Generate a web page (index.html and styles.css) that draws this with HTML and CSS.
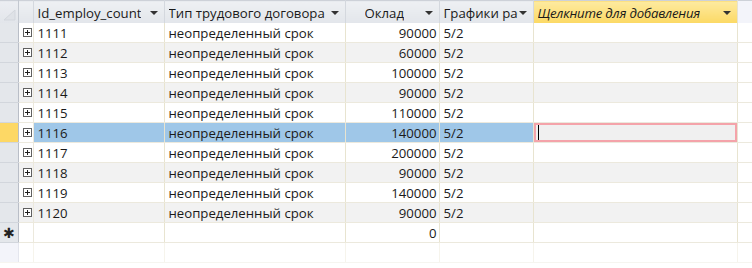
FILE: index.html
```html
<!DOCTYPE html>
<html lang="ru">
<head>
<meta charset="utf-8">
<link rel="stylesheet" href="styles.css">
</head>
<body>
<table class="grid">
  <colgroup>
    <col class="w-sel"><col class="w-exp"><col class="w-c1"><col class="w-c2"><col class="w-c3"><col class="w-c4"><col class="w-c5"><col class="w-rest">
  </colgroup>
  <thead>
    <tr class="head">
      <th class="corner"><svg class="corner-tri" width="14" height="12" viewBox="0 0 14 12"><polygon points="13,1 13,11 2,11" fill="#dfe2e7" stroke="#d3d7dd" stroke-width="1"/></svg></th>
      <th class="hexp"></th>
      <th class="hcell"><span class="htext">Id_employ_count</span><span class="arrow"></span></th>
      <th class="hcell"><span class="htext">Тип трудового договора</span><span class="arrow"></span></th>
      <th class="hcell"><span class="htext right">Оклад</span><span class="arrow"></span></th>
      <th class="hcell"><span class="htext">Графики работы</span><span class="arrow"></span></th>
      <th class="hcell add"><span class="htext">Щелкните для добавления</span><span class="arrow"></span></th>
      <th class="hrest"></th>
    </tr>
  </thead>
  <tbody>
    <tr class="row"><td class="sel"></td><td class="exp"><span class="plus"></span></td><td class="c">1111</td><td class="c">неопределенный срок</td><td class="c num">90000</td><td class="c">5/2</td><td class="c"></td><td class="rest"></td></tr>
    <tr class="row alt"><td class="sel"></td><td class="exp"><span class="plus"></span></td><td class="c">1112</td><td class="c">неопределенный срок</td><td class="c num">60000</td><td class="c">5/2</td><td class="c"></td><td class="rest"></td></tr>
    <tr class="row"><td class="sel"></td><td class="exp"><span class="plus"></span></td><td class="c">1113</td><td class="c">неопределенный срок</td><td class="c num">100000</td><td class="c">5/2</td><td class="c"></td><td class="rest"></td></tr>
    <tr class="row alt"><td class="sel"></td><td class="exp"><span class="plus"></span></td><td class="c">1114</td><td class="c">неопределенный срок</td><td class="c num">90000</td><td class="c">5/2</td><td class="c"></td><td class="rest"></td></tr>
    <tr class="row"><td class="sel"></td><td class="exp"><span class="plus"></span></td><td class="c">1115</td><td class="c">неопределенный срок</td><td class="c num">110000</td><td class="c">5/2</td><td class="c"></td><td class="rest"></td></tr>
    <tr class="row current"><td class="sel"></td><td class="exp"><span class="plus"></span></td><td class="c">1116</td><td class="c">неопределенный срок</td><td class="c num">140000</td><td class="c">5/2</td><td class="c active"><span class="caret"></span></td><td class="rest"></td></tr>
    <tr class="row"><td class="sel"></td><td class="exp"><span class="plus"></span></td><td class="c">1117</td><td class="c">неопределенный срок</td><td class="c num">200000</td><td class="c">5/2</td><td class="c"></td><td class="rest"></td></tr>
    <tr class="row alt"><td class="sel"></td><td class="exp"><span class="plus"></span></td><td class="c">1118</td><td class="c">неопределенный срок</td><td class="c num">90000</td><td class="c">5/2</td><td class="c"></td><td class="rest"></td></tr>
    <tr class="row"><td class="sel"></td><td class="exp"><span class="plus"></span></td><td class="c">1119</td><td class="c">неопределенный срок</td><td class="c num">140000</td><td class="c">5/2</td><td class="c"></td><td class="rest"></td></tr>
    <tr class="row alt"><td class="sel"></td><td class="exp"><span class="plus"></span></td><td class="c">1120</td><td class="c">неопределенный срок</td><td class="c num">90000</td><td class="c">5/2</td><td class="c"></td><td class="rest"></td></tr>
    <tr class="row new"><td class="sel star">✱</td><td class="exp"></td><td class="c"></td><td class="c"></td><td class="c num">0</td><td class="c"></td><td class="c"></td><td class="rest"></td></tr>
    <tr class="row empty"><td class="sel"></td><td class="exp"></td><td class="c"></td><td class="c"></td><td class="c"></td><td class="c"></td><td class="c"></td><td class="rest"></td></tr>
  </tbody>
</table>
</body>
</html>
```

FILE: styles.css
```css
html, body {
  margin: 0;
  padding: 0;
  background: #ffffff;
  overflow: hidden;
}

.grid {
  border-collapse: collapse;
  table-layout: fixed;
  width: 752px;
  font-family: "Open Sans", "Noto Sans", sans-serif;
  font-size: 13.2px;
  color: #1a1a1a;
}

.w-sel { width: 18px; }
.w-exp { width: 15px; }
.w-c1 { width: 131px; }
.w-c2 { width: 181px; }
.w-c3 { width: 94px; }
.w-c4 { width: 94px; }
.w-c5 { width: 204px; }
.w-rest { width: 15px; }

.head th {
  height: 22px;
  padding: 0;
  font-weight: normal;
  text-align: left;
  white-space: nowrap;
  overflow: hidden;
  position: relative;
  border-top: 1px solid #cdd1d8;
}

.corner {
  background: linear-gradient(#eceef2, #e2e5ea);
  border-right: 1px solid #c3c8d0;
}

.corner-tri {
  display: block;
  margin: 6px 0 0 2px;
}

.hexp {
  background: linear-gradient(#eef0f3, #e3e6eb);
  border-right: 1px solid #d4d8de;
}

.hcell {
  background: linear-gradient(#eef0f3, #e3e6eb);
  border-right: 1px solid #d4d8de;
}

.hcell .htext {
  display: inline-block;
  vertical-align: middle;
  max-width: calc(100% - 19px);
  margin-left: 4px;
  overflow: hidden;
  white-space: nowrap;
}

.hcell .htext.right {
  margin-left: 19px;
}

.hcell.add {
  background: linear-gradient(#fdeaa0, #fcd964);
  font-style: italic;
  border-right: 1px solid #e6e2cf;
}

.hcell.add .htext {
  letter-spacing: -0.2px;
}

.hrest {
  background: #f3f4fa;
}

.arrow {
  position: absolute;
  right: 6px;
  top: 10px;
  width: 0;
  height: 0;
  border-left: 4px solid transparent;
  border-right: 4px solid transparent;
  border-top: 4px solid #333;
}

.row td {
  height: 19px;
  padding: 0;
  border-bottom: 1px solid #ece9dd;
  white-space: nowrap;
  overflow: hidden;
}

.row .c {
  padding: 0 4px;
  border-right: 1px solid #e8e4d0;
}

.row .num {
  text-align: right;
  padding-right: 2px;
}

.row.alt .c,
.row.alt .exp {
  background: #f2f2f2;
}

.sel {
  background: #e4e7eb;
  border-right: 1px solid #b9bec7;
  text-align: center;
}

.row td.sel {
  border-bottom: 1px solid #d2d6dc;
}

.exp {
  border-right: 1px solid #ece9dd;
  text-align: center;
}

.plus {
  display: block;
  position: relative;
  width: 9px;
  height: 9px;
  box-sizing: border-box;
  border: 1px solid #606060;
  background: #ffffff;
  margin: 0 auto 0 4px;
}

.plus::before,
.plus::after {
  content: "";
  position: absolute;
  background: #202020;
}

.plus::before {
  left: 1px;
  top: 3px;
  width: 5px;
  height: 1px;
}

.plus::after {
  left: 3px;
  top: 1px;
  width: 1px;
  height: 5px;
}

.row.current .c {
  background: #9fc7e8;
}

.row.current .sel {
  background: #fdd865;
}

.row.current .exp {
  background: #ffffff;
}

.row.current .c.active {
  background: #f0f0f0;
  box-shadow: inset 0 0 0 2px #f4a3aa;
  position: relative;
}

.caret {
  display: block;
  width: 1px;
  height: 15px;
  background: #000;
}

.star {
  font-size: 14px;
  line-height: 14px;
  color: #222;
}

.rest {
  background: #ffffff;
}

.row.empty td {
  border-bottom: 1px solid #f6f5f0;
}

.row.empty .sel {
  background: #f3f4fa;
  border-right: 1px solid #e4e6ee;
}

.row.empty .c,
.row.empty .exp {
  border-right: 1px solid #f6f4ec;
}
```
